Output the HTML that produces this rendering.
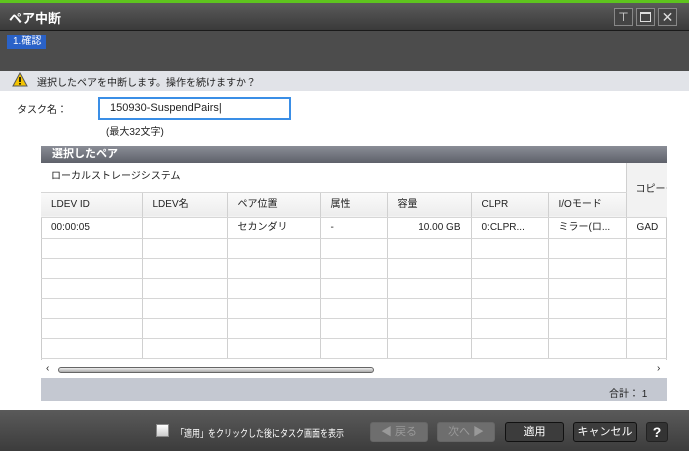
<!DOCTYPE html>
<html><head><meta charset="utf-8"><style>
*{margin:0;padding:0;box-sizing:border-box}
body{width:689px;height:451px;overflow:hidden;background:#fff;font-family:"Liberation Sans","Noto Sans CJK JP",sans-serif;font-size:11px;color:#222;position:relative}
.a{position:absolute}
.btn{position:absolute;top:422px;height:20px;border:1px solid #222;border-radius:3px;color:#fff;font-size:11px;text-align:center;line-height:18px}
td{border-right:1px solid #d0d0d0;border-bottom:1px solid #d6d6d6;padding:0 10px;font-size:10px;line-height:12px;vertical-align:middle;white-space:nowrap;overflow:hidden}
.hd td{background:linear-gradient(#fafafa,#ececec)}
</style></head><body>
<div class="a" style="left:0;top:0;width:689px;height:3px;background:#5ec41e"></div>
<div class="a" style="left:0;top:3px;width:689px;height:28px;background:linear-gradient(#5a5a5a,#3a3a3a);border-bottom:1px solid #1a1a1a"></div>
<div class="a" style="left:9px;top:8px;color:#fff;font-size:13px;font-weight:bold">ペア中断</div>
<div class="a" style="left:614px;top:8px;width:19px;height:18px;border:1px solid #888;background:#444;color:#ddd;text-align:center;font-size:12px;line-height:16px">⊤</div>
<div class="a" style="left:636px;top:8px;width:19px;height:18px;border:1px solid #888;background:#444"><div style="margin:3px;width:11px;height:10px;border:1px solid #ddd;border-top-width:2px"></div></div>
<div class="a" style="left:658px;top:8px;width:19px;height:18px;border:1px solid #888;background:#444;color:#ddd;text-align:center;font-size:14px;line-height:16px">✕</div>
<div class="a" style="left:0;top:31px;width:689px;height:40px;background:#4c4c4c"></div>
<div class="a" style="left:7px;top:35px;width:39px;height:14px;background:#2a62c8;color:#fff;font-size:10px;line-height:14px;padding-left:6px">1.確認</div>
<div class="a" style="left:0;top:71px;width:689px;height:20px;background:#e1e3e8"></div>
<svg class="a" style="left:12px;top:72px" width="16" height="15"><path d="M8 1L15 14H1Z" fill="#f4c400" stroke="#555"/><rect x="7.2" y="5" width="1.6" height="5" fill="#000"/><rect x="7.2" y="11" width="1.6" height="1.6" fill="#000"/></svg>
<div class="a" style="left:37px;top:74px;font-size:10px">選択したペアを中断します。操作を続けますか？</div>
<div class="a" style="left:17px;top:101px;font-size:10px">タスク名：</div>
<div class="a" style="left:98px;top:97px;width:193px;height:23px;border:2px solid #3a8ee6;padding-left:10px;line-height:19px;font-size:11px">150930-SuspendPairs|</div>
<div class="a" style="left:106px;top:123px;font-size:10px">(最大32文字)</div>
<div class="a" style="left:41px;top:146px;width:626px;height:255px;background:#fff;border:1px solid #ccc"></div>
<div class="a" style="left:41px;top:146px;width:626px;height:17px;background:linear-gradient(#8a8d96,#5e616a);color:#fff;font-weight:bold;font-size:11px;padding-left:11px;line-height:17px">選択したペア</div>
<div class="a" style="left:41px;top:163px;width:626px;height:197px;overflow:hidden">
<table style="border-collapse:collapse;table-layout:fixed;width:630px">
<colgroup><col style="width:101px"><col style="width:85px"><col style="width:93px"><col style="width:67px"><col style="width:84px"><col style="width:77px"><col style="width:78px"><col style="width:45px"></colgroup>
<tr style="height:29px"><td colspan="7" style="background:#fff">ローカルストレージシステム</td><td rowspan="2" style="background:#f2f2f2;padding:0 9px">コピータ</td></tr>
<tr class="hd" style="height:25px"><td>LDEV ID</td><td>LDEV名</td><td>ペア位置</td><td>属性</td><td>容量</td><td>CLPR</td><td>I/Oモード</td></tr>
<tr style="height:21px"><td>00:00:05</td><td></td><td>セカンダリ</td><td>-</td><td style="text-align:right">10.00 GB</td><td>0:CLPR...</td><td>ミラー(ロ...</td><td>GAD</td></tr>
<tr style="height:20px"><td></td><td></td><td></td><td></td><td></td><td></td><td></td><td></td></tr>
<tr style="height:20px"><td></td><td></td><td></td><td></td><td></td><td></td><td></td><td></td></tr>
<tr style="height:20px"><td></td><td></td><td></td><td></td><td></td><td></td><td></td><td></td></tr>
<tr style="height:20px"><td></td><td></td><td></td><td></td><td></td><td></td><td></td><td></td></tr>
<tr style="height:20px"><td></td><td></td><td></td><td></td><td></td><td></td><td></td><td></td></tr>
<tr style="height:20px"><td></td><td></td><td></td><td></td><td></td><td></td><td></td><td></td></tr>
</table></div>
<div class="a" style="left:41px;top:360px;width:626px;height:18px;background:#fff"></div>
<div class="a" style="left:46px;top:363px;font-size:10px">‹</div>
<div class="a" style="left:58px;top:367px;width:316px;height:6px;border:1px solid #666;border-radius:3px;background:linear-gradient(#eee,#aaa)"></div>
<div class="a" style="left:657px;top:363px;font-size:10px">›</div>
<div class="a" style="left:41px;top:378px;width:626px;height:23px;background:#c4c8d1"></div>
<div class="a" style="left:609px;top:385px;font-size:10px">合計：  1</div>
<div class="a" style="left:0;top:410px;width:689px;height:41px;background:linear-gradient(#5a5a5a,#3c3c3c)"></div>
<div class="a" style="left:156px;top:424px;width:13px;height:13px;background:linear-gradient(#fff,#ccc);border:1px solid #888"></div>
<div class="a" style="left:176px;top:425px;color:#fff;font-size:10px;transform:scaleX(0.8);transform-origin:0 0;white-space:nowrap">「適用」をクリックした後にタスク画面を表示</div>
<div class="btn" style="left:370px;width:58px;background:#6e6e6e;border-color:#666;color:#999">◀ 戻る</div>
<div class="btn" style="left:437px;width:58px;background:#6e6e6e;border-color:#666;color:#999">次へ ▶</div>
<div class="btn" style="left:505px;width:59px;background:#3c3c3c;border-color:#111">適用</div>
<div class="btn" style="left:573px;width:64px;background:#3c3c3c;border-color:#111">キャンセル</div>
<div class="btn" style="left:646px;width:22px;background:#333;font-weight:bold;font-size:14px">?</div>
</body></html>
